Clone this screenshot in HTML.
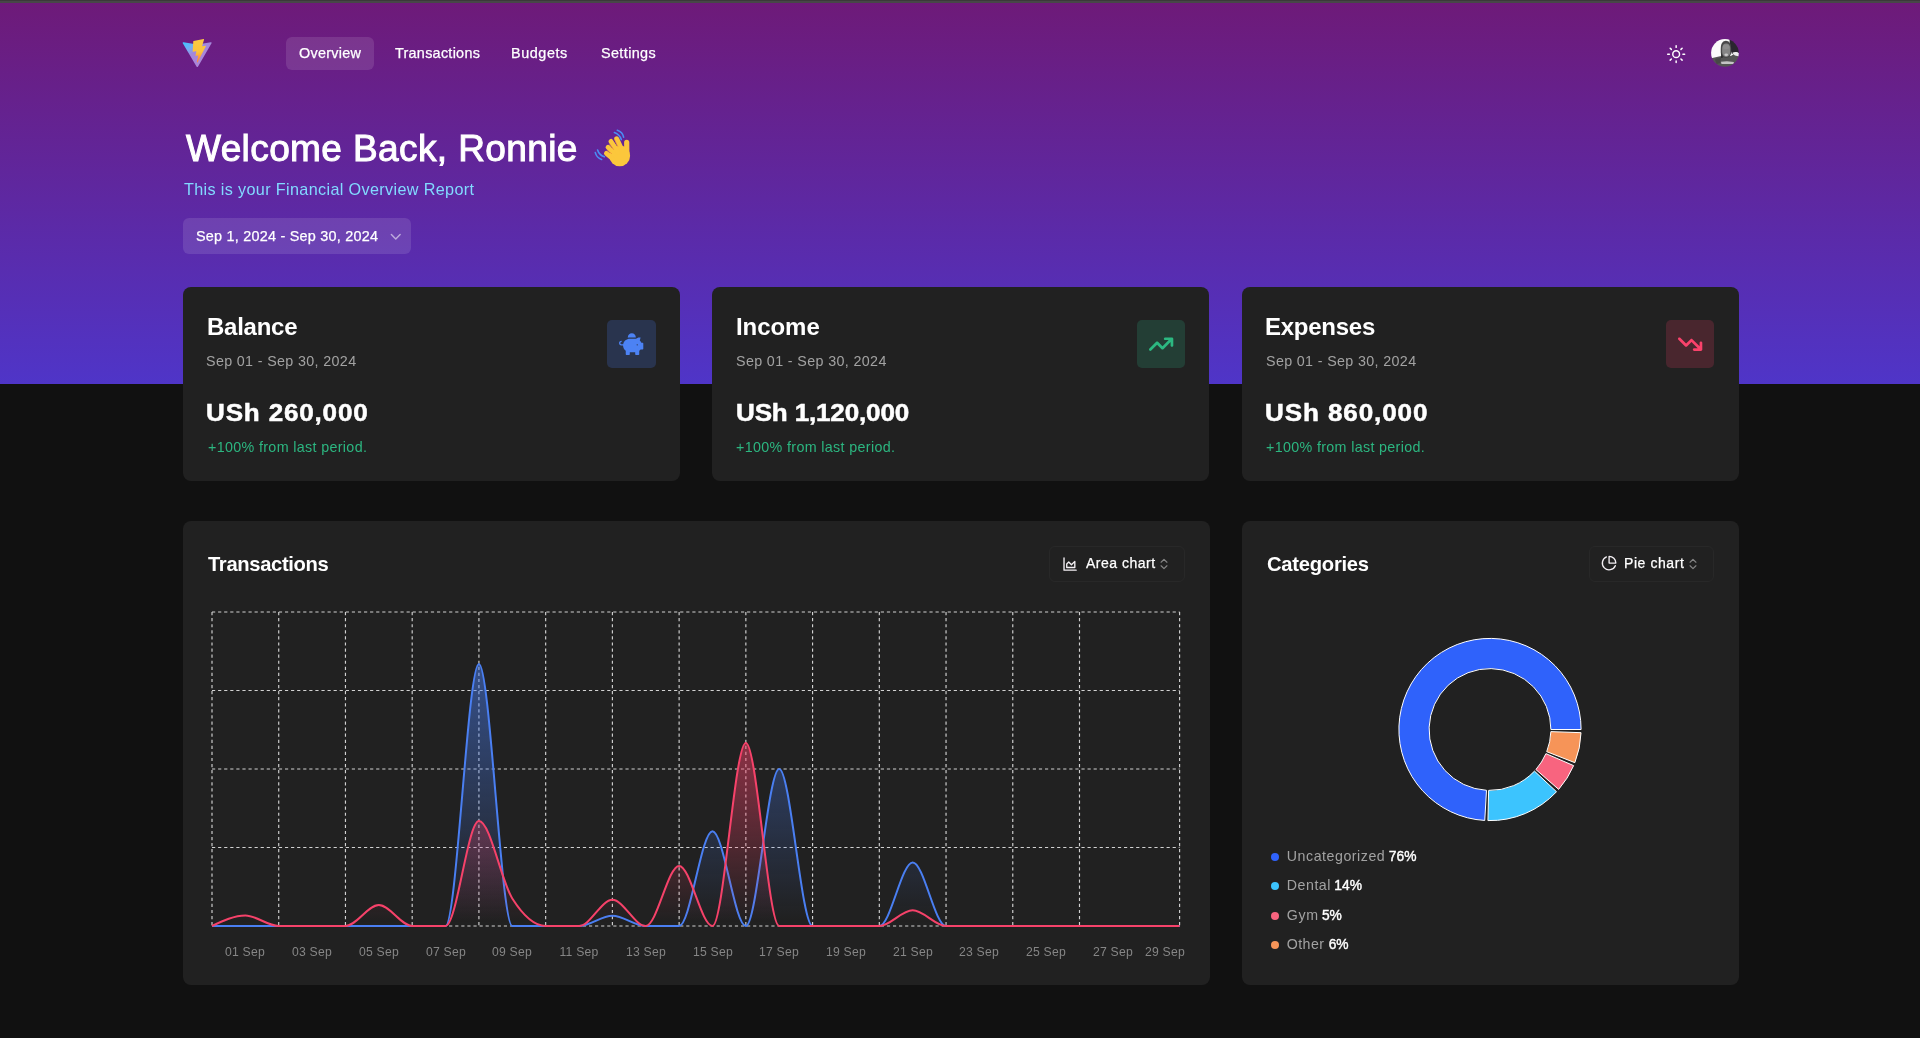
<!DOCTYPE html>
<html lang="en">
<head>
<meta charset="utf-8">
<title>Finance Overview</title>
<style>
*{box-sizing:border-box;margin:0;padding:0}
html,body{width:1920px;height:1038px;overflow:hidden;background:#111111}
body{font-family:"Liberation Sans",sans-serif;color:#fff;position:relative;-webkit-font-smoothing:antialiased}
.abs{position:absolute}
.topbar{left:0;top:0;width:1920px;height:3px;background:linear-gradient(#3b3939 0,#3b3939 1px,#474747 1px,#474747 3px);z-index:5}
.hero{left:0;top:0;width:1920px;height:384px;background:linear-gradient(180deg,#6e1a78 0%,#4f35c8 100%)}
.t{position:absolute;white-space:nowrap;line-height:1.2;transform-origin:0 50%;will-change:transform}
.navbtn{left:286px;top:37px;width:87.5px;height:33px;border-radius:6px;background:rgba(255,255,255,.115)}
.nav{font-size:14.4px;color:#fff;-webkit-text-stroke:.25px #fff}
.title{font-size:37px;color:#fff;-webkit-text-stroke:1px #fff}
.sub{font-size:16.2px;color:#82daff}
.datebtn{left:183px;top:217.5px;width:228px;height:36.5px;border-radius:6px;background:rgba(255,255,255,.115)}
.card{position:absolute;background:#212121;border-radius:8px}
.ctitle{font-size:24px;font-weight:700;color:#fff}
.cdate{font-size:14.3px;color:#a2a2a2}
.amt{font-size:23.7px;font-weight:700;color:#fff;-webkit-text-stroke:.5px #fff}
.delta{font-size:14.3px;color:#2cb680}
.ibox{position:absolute;width:48.6px;height:48.1px;border-radius:5px;top:320px}
.h2{font-size:20.2px;font-weight:700;color:#fff}
.sel{position:absolute;top:546px;height:36px;border:1px solid #282828;border-radius:6px}
.selt{font-size:14px;color:#fff;-webkit-text-stroke:.25px #fff}
.tk{will-change:transform;position:absolute;top:945px;letter-spacing:.25px;width:60px;text-align:center;font-size:12.2px;line-height:15px;color:#868686;white-space:nowrap}
.lg{font-size:14.2px;color:#a2a2a2}
.lg b{color:#fff;font-weight:400;font-size:13.8px;-webkit-text-stroke:.4px #fff}
.dot{position:absolute;width:8px;height:8px;border-radius:50%;left:1270.8px}
svg{position:absolute;overflow:visible}
#c1a{letter-spacing:0.745px;margin-left:-1.00px;transform:scaleX(1.1)}#c2a{letter-spacing:-0.156px;margin-left:-0.40px;transform:scaleX(1.1)}#c3a{letter-spacing:0.803px;margin-left:-0.80px;transform:scaleX(1.1)}#n1{letter-spacing:0.286px;margin-left:1.00px}#n2{letter-spacing:0.273px;margin-left:0.00px}#n3{letter-spacing:0.583px;margin-left:0.00px}#n4{letter-spacing:0.386px;margin-left:0.80px}#title{letter-spacing:0.395px;margin-left:2.00px}#sub{letter-spacing:0.351px;margin-left:1.00px}#dtxt{letter-spacing:0.240px;margin-left:0.80px}#c1t{letter-spacing:-0.250px;margin-left:-0.50px}#c2t{letter-spacing:-0.060px;margin-left:-0.50px}#c3t{letter-spacing:-0.257px;margin-left:-0.80px}#c1d{letter-spacing:0.350px;margin-left:-1.00px}#c2d{letter-spacing:0.365px;margin-left:-0.80px}#c3d{letter-spacing:0.350px;margin-left:-0.40px}#c1p{letter-spacing:0.341px;margin-left:0.00px}#c2p{letter-spacing:0.345px;margin-left:-0.80px}#c3p{letter-spacing:0.336px;margin-left:-0.40px}#h2a{letter-spacing:-0.345px;margin-left:0.80px}#h2b{letter-spacing:-0.256px;margin-left:0.80px}#s1{letter-spacing:0.500px;margin-left:0.50px}#s2{letter-spacing:0.575px;margin-left:-0.60px}#l1a{letter-spacing:0.533px;margin-left:-0.20px}#l1b{letter-spacing:0.000px;margin-left:-0.40px}#l2a{letter-spacing:0.520px;margin-left:-0.20px}#l2b{letter-spacing:0.000px;margin-left:-0.60px}#l3a{letter-spacing:0.600px;margin-left:-0.20px}#l3b{letter-spacing:0.000px;margin-left:-0.60px}#l4a{letter-spacing:0.400px;margin-left:-0.20px}#l4b{letter-spacing:0.000px;margin-left:0.40px}</style>
</head>
<body>
<div class="abs hero"></div>
<div class="abs topbar"></div>

<!-- header -->
<svg style="left:182.2px;top:39.3px" width="30.3" height="28.75" viewBox="0 0 410 404" preserveAspectRatio="none">
<defs><linearGradient id="vg0" x1="6" y1="33" x2="235" y2="344" gradientUnits="userSpaceOnUse"><stop offset="0" stop-color="#36c8ff"/><stop offset=".36" stop-color="#74aef5"/><stop offset=".56" stop-color="#a287dc"/><stop offset="1" stop-color="#ab86d8"/></linearGradient>
<linearGradient id="vg1" x1="194.651" y1="8.818" x2="236.076" y2="292.989" gradientUnits="userSpaceOnUse"><stop offset="0" stop-color="#fccb40"/><stop offset=".6" stop-color="#fbc53c"/><stop offset="1" stop-color="#ff8a3a"/></linearGradient></defs>
<path d="M399.641 59.5246L215.643 388.545C211.844 395.338 202.084 395.378 198.228 388.618L10.5817 59.5563C6.38087 52.1896 12.6802 43.2665 21.0281 44.7586L205.223 77.6824C206.398 77.8924 207.601 77.8904 208.776 77.6763L389.119 44.8058C397.439 43.2894 403.768 52.1434 399.641 59.5246Z" fill="url(#vg0)"/>
<path d="M292.965 1.5744L156.801 28.2552C154.563 28.6937 152.906 30.5903 152.771 32.8664L144.395 174.33C144.198 177.662 147.258 180.248 150.51 179.498L188.42 170.749C191.967 169.931 195.172 173.055 194.443 176.622L183.18 231.775C182.422 235.487 185.907 238.661 189.532 237.56L212.947 230.446C216.577 229.344 220.065 232.527 219.297 236.242L201.398 322.875C200.278 328.294 207.486 331.249 210.492 326.603L212.5 323.5L323.454 102.072C325.312 98.3645 322.108 94.137 318.036 94.9228L279.014 102.454C275.347 103.161 272.227 99.746 273.262 96.1583L298.731 7.86689C299.767 4.27314 296.636 0.855181 292.965 1.5744Z" fill="url(#vg1)"/>
</svg>
<div class="abs navbtn"></div>
<span class="t nav" id="n1" style="left:298.2px;top:44.9px">Overview</span>
<span class="t nav" id="n2" style="left:394.6px;top:44.9px">Transactions</span>
<span class="t nav" id="n3" style="left:511.4px;top:44.9px">Budgets</span>
<span class="t nav" id="n4" style="left:599.9px;top:44.9px">Settings</span>
<svg style="left:1665.6px;top:43.8px" width="20.3" height="20.3" viewBox="0 0 24 24" fill="none" stroke="#fff" stroke-width="1.75" stroke-linecap="round" stroke-linejoin="round"><circle cx="12" cy="12" r="4"/><path d="M12 2v2"/><path d="M12 20v2"/><path d="m4.93 4.93 1.41 1.41"/><path d="m17.66 17.66 1.41 1.41"/><path d="M2 12h2"/><path d="M20 12h2"/><path d="m6.34 17.66-1.41 1.41"/><path d="m19.07 4.93-1.41 1.41"/></svg>
<svg style="left:1710.5px;top:39px" width="27.9" height="27.9" viewBox="0 0 28 28">
<defs><clipPath id="avc"><circle cx="14" cy="14" r="13.900"/></clipPath><filter id="avb" x="-10%" y="-10%" width="120%" height="120%"><feGaussianBlur stdDeviation=".55"/></filter></defs>
<g clip-path="url(#avc)"><g filter="url(#avb)">
<rect x="-2" y="-2" width="32" height="32" fill="#fbfbfb"/>
<path d="M18.500 -1L30 -1L30 15L26 13.500L21 15L19 9z" fill="#29262e"/>
<path d="M-1 19.500L8 17.500L13 16.500L20 17L23 15L30 17L30 30L-1 30z" fill="#545454"/>
<path d="M9.800 9.500C9.800 4.500 12 1.800 15 1.800S20.200 4.500 20.200 9.500V13C20.200 16.500 18 19 15 19S9.800 16.500 9.800 13z" fill="#4a4a4a"/>
<path d="M11.200 9C11.500 6 13 4.600 15.200 4.600S19 6 19.300 9V13C19.300 16 17.500 18 15.200 18S11.200 16 11.200 13z" fill="#858585"/>
<ellipse cx="15.200" cy="8" rx="3.200" ry="2.200" fill="#8e8e8e"/>
<ellipse cx="15.300" cy="15.800" rx="1.800" ry="1.300" fill="#c9c9c9"/>
<path d="M10.300 13.500L12.200 18.500L10 19z" fill="#2e2e2e"/>
<path d="M21.300 14C23 12.600 26 12.400 28.500 14.500V17.500L24 16.500z" fill="#ececec"/>
<path d="M10 22.800L16 22.400L23 23L22.500 25L10.500 25.200z" fill="#c4c4c4"/>
<path d="M4 20L10 18.500L9 24L5.500 25z" fill="#474747"/>
</g></g></svg>

<span class="t title" id="title" style="left:183.6px;top:127.4px">Welcome Back, Ronnie</span>
<svg style="left:593px;top:128px" width="40" height="40" viewBox="0 0 40 40">
<g fill="none" stroke="#4a8df5" stroke-width="1.6" stroke-linecap="round">
<path d="M24.300 2.300Q29.600 4 30.600 9.100"/><path d="M21.400 4.600Q26.600 6.500 28.300 11.600"/>
<path d="M2.300 24.600Q3.600 29.800 8.600 31.400"/><path d="M4.600 22Q6.100 27 11.400 28.800"/>
</g>
<g stroke="#fbc73c" stroke-linecap="round" fill="#fbc73c">
<circle cx="26.700" cy="27.800" r="10.400" stroke="none"/>
<path d="M13.400 25.400L20 31" stroke-width="4.800"/>
<path d="M15 19.200L22 27" stroke-width="4.800"/>
<path d="M17.900 13.400L25 24" stroke-width="4.800"/>
<path d="M23.700 10.700L29 22" stroke-width="4.900"/>
<path d="M33.700 14.300L33.800 26" stroke-width="5.200"/>
<path d="M20 31L24 36" stroke-width="3"/>
</g>
<g stroke="#ef8f3a" stroke-width=".8" stroke-linecap="round" fill="none" opacity=".9">
<path d="M14.600 22.300l4 3.300"/><path d="M16.800 16.300l3.800 5.200"/><path d="M21.600 11.500l3.100 6.800"/>
</g>
</svg>
<span class="t sub" id="sub" style="left:183.4px;top:179.9px">This is your Financial Overview Report</span>
<div class="abs datebtn"></div>
<span class="t nav" id="dtxt" style="left:195px;top:227.6px">Sep 1, 2024 - Sep 30, 2024</span>
<svg style="left:386.5px;top:228.1px" width="17.5" height="17.5" viewBox="0 0 24 24" fill="none" stroke="#fff" stroke-opacity=".55" stroke-width="2" stroke-linecap="round" stroke-linejoin="round"><path d="m6 9 6 6 6-6"/></svg>

<!-- stat cards -->
<div class="card" style="left:183px;top:286.6px;width:497px;height:194.4px"></div>
<span class="t ctitle" id="c1t" style="left:207.3px;top:313.3px">Balance</span>
<span class="t cdate" id="c1d" style="left:207.3px;top:353.1px">Sep 01 - Sep 30, 2024</span>
<span class="t amt" id="c1a" style="left:207.3px;top:398.5px">USh 260,000</span>
<span class="t delta" id="c1p" style="left:207.9px;top:439px">+100% from last period.</span>
<div class="ibox" style="left:607.1px;width:48.9px;background:#29344e"></div>
<svg style="left:619.25px;top:332.15px" width="24.3" height="24.3" viewBox="0 0 576 512" fill="#4c82f4"><path d="M560 224h-29.500c-8.800-20-21.600-37.700-37.400-52.500L512 96h-32c-29.400 0-55.400 13.500-73 34.300-7.600-1.100-15.100-2.300-23-2.300H256c-77.400 0-141.900 55-156.800 128H56c-14.800 0-26.500-13.500-23.500-28.800C34.700 215.800 45.400 208 57 208h1c3.300 0 6-2.700 6-6v-20c0-3.300-2.700-6-6-6-28.500 0-53.900 20.400-57.500 48.600C-3.900 258.800 22.700 288 56 288h40c0 52.200 25.400 98.100 64 127.300V496c0 8.800 7.200 16 16 16h64c8.800 0 16-7.200 16-16v-48h128v48c0 8.800 7.200 16 16 16h64c8.800 0 16-7.200 16-16v-80.700c11.800-8.900 22.300-19.400 31.300-31.300H560c8.800 0 16-7.200 16-16V240c0-8.800-7.200-16-16-16zm-128 64c-8.800 0-16-7.200-16-16s7.200-16 16-16 16 7.200 16 16-7.200 16-16 16zM256 96h128c5.400 0 10.700.4 15.900.8 0-.3.100-.5.100-.8 0-53-43-96-96-96s-96 43-96 96c0 2.100.5 4.100.6 6.200 15.200-3.900 31-6.200 47.400-6.200z"/></svg><div class="card" style="left:712.3px;top:286.6px;width:497px;height:194.4px"></div>
<span class="t ctitle" id="c2t" style="left:736.5999999999999px;top:313.3px">Income</span>
<span class="t cdate" id="c2d" style="left:736.5999999999999px;top:353.1px">Sep 01 - Sep 30, 2024</span>
<span class="t amt" id="c2a" style="left:736.5999999999999px;top:398.5px">USh 1,120,000</span>
<span class="t delta" id="c2p" style="left:737.1999999999999px;top:439px">+100% from last period.</span>
<div class="ibox" style="left:1137.0px;width:47.9px;background:#233e35"></div>
<svg style="left:1148.55px;top:332.15px" width="24.3" height="24.3" viewBox="0 0 576 512" fill="#2cb881"><path d="M384 160c-17.700 0-32-14.300-32-32s14.300-32 32-32H544c17.700 0 32 14.300 32 32V288c0 17.700-14.300 32-32 32s-32-14.300-32-32V205.300L342.600 374.600c-12.500 12.500-32.800 12.500-45.300 0L192 269.300 54.600 406.600c-12.500 12.500-32.800 12.500-45.300 0s-12.500-32.800 0-45.300l160-160c12.500-12.500 32.800-12.500 45.300 0L320 306.700 466.700 160H384z"/></svg><div class="card" style="left:1241.7px;top:286.6px;width:497px;height:194.4px"></div>
<span class="t ctitle" id="c3t" style="left:1266.0px;top:313.3px">Expenses</span>
<span class="t cdate" id="c3d" style="left:1266.0px;top:353.1px">Sep 01 - Sep 30, 2024</span>
<span class="t amt" id="c3a" style="left:1266.0px;top:398.5px">USh 860,000</span>
<span class="t delta" id="c3p" style="left:1266.6px;top:439px">+100% from last period.</span>
<div class="ibox" style="left:1666.0px;width:48.2px;background:#49262e"></div>
<svg style="left:1677.95px;top:332.15px" width="24.3" height="24.3" viewBox="0 0 576 512" fill="#f9426b"><path d="M384 352c-17.700 0-32 14.300-32 32s14.300 32 32 32H544c17.700 0 32-14.300 32-32V224c0-17.700-14.300-32-32-32s-32 14.300-32 32v82.700L342.600 137.400c-12.500-12.500-32.800-12.500-45.300 0L192 242.700 54.600 105.400c-12.500-12.500-32.800-12.500-45.300 0s-12.500 32.800 0 45.300l160 160c12.500 12.500 32.800 12.500 45.300 0L320 205.300 466.700 352H384z"/></svg>

<!-- transactions card -->
<div class="card" style="left:183px;top:521px;width:1027px;height:464px"></div>
<div class="card" style="left:1242px;top:521px;width:496.6px;height:464px"></div>
<span class="t h2" id="h2a" style="left:207.3px;top:551.9px">Transactions</span>
<div class="sel" style="left:1049px;width:136px"></div>
<svg style="left:1061.6px;top:556.2px" width="16.2" height="16.2" viewBox="0 0 24 24" fill="none" stroke="#f4f0f4" stroke-width="2" stroke-linecap="round" stroke-linejoin="round"><path d="M3 3v18h18"/><path d="M7 12v5h12V8l-5 5-4-4Z"/></svg>
<span class="t selt" id="s1" style="left:1085.6px;top:555.1px">Area chart</span>
<svg style="left:1157.2px;top:557.2px" width="14" height="14" viewBox="0 0 24 24" fill="none" stroke="#fff" stroke-opacity=".45" stroke-width="2" stroke-linecap="round" stroke-linejoin="round"><path d="m7 15 5 5 5-5"/><path d="m7 9 5-5 5 5"/></svg>

<svg style="left:0;top:0" width="1920" height="1038" viewBox="0 0 1920 1038">
<defs>
<linearGradient id="gi" x1="0" y1="0" x2="0" y2="1"><stop offset="2%" stop-color="#4a7ff2" stop-opacity=".5"/><stop offset="98%" stop-color="#4a7ff2" stop-opacity="0"/></linearGradient>
<linearGradient id="ge" x1="0" y1="0" x2="0" y2="1"><stop offset="2%" stop-color="#f6426a" stop-opacity=".5"/><stop offset="98%" stop-color="#f6426a" stop-opacity="0"/></linearGradient>
</defs>
<g stroke="#d2d2d2" stroke-width="1.15" stroke-dasharray="3.2 2.88" fill="none"><line x1="212.00" y1="612.00" x2="1179.60" y2="612.00"/><line x1="212.00" y1="690.50" x2="1179.60" y2="690.50"/><line x1="212.00" y1="769.00" x2="1179.60" y2="769.00"/><line x1="212.00" y1="847.50" x2="1179.60" y2="847.50"/><line x1="212.00" y1="926.00" x2="1179.60" y2="926.00"/><line x1="212.00" y1="612.00" x2="212.00" y2="926.00"/><line x1="278.73" y1="612.00" x2="278.73" y2="926.00"/><line x1="345.46" y1="612.00" x2="345.46" y2="926.00"/><line x1="412.19" y1="612.00" x2="412.19" y2="926.00"/><line x1="478.92" y1="612.00" x2="478.92" y2="926.00"/><line x1="545.66" y1="612.00" x2="545.66" y2="926.00"/><line x1="612.39" y1="612.00" x2="612.39" y2="926.00"/><line x1="679.12" y1="612.00" x2="679.12" y2="926.00"/><line x1="745.85" y1="612.00" x2="745.85" y2="926.00"/><line x1="812.58" y1="612.00" x2="812.58" y2="926.00"/><line x1="879.31" y1="612.00" x2="879.31" y2="926.00"/><line x1="946.04" y1="612.00" x2="946.04" y2="926.00"/><line x1="1012.77" y1="612.00" x2="1012.77" y2="926.00"/><line x1="1079.50" y1="612.00" x2="1079.50" y2="926.00"/><line x1="1179.60" y1="612.00" x2="1179.60" y2="926.00"/></g>
<path d="M212.00,926.00C223.12,926.00,234.24,926.00,245.37,926.00C256.49,926.00,267.61,926.00,278.73,926.00C289.85,926.00,300.97,926.00,312.10,926.00C323.22,926.00,334.34,926.00,345.46,926.00C356.58,926.00,367.71,926.00,378.83,926.00C389.95,926.00,401.07,926.00,412.19,926.00C423.31,926.00,434.44,926.00,445.56,926.00C456.68,926.00,467.80,664.00,478.92,664.00C490.05,664.00,501.17,926.00,512.29,926.00C523.41,926.00,534.53,926.00,545.66,926.00C556.78,926.00,567.90,926.00,579.02,926.00C590.14,926.00,601.26,915.70,612.39,915.70C623.51,915.70,634.63,926.00,645.75,926.00C656.87,926.00,668.00,926.00,679.12,926.00C690.24,926.00,701.36,831.20,712.48,831.20C723.60,831.20,734.73,926.00,745.85,926.00C756.97,926.00,768.09,769.00,779.21,769.00C790.34,769.00,801.46,926.00,812.58,926.00C823.70,926.00,834.82,926.00,845.94,926.00C857.07,926.00,868.19,926.00,879.31,926.00C890.43,926.00,901.55,862.50,912.68,862.50C923.80,862.50,934.92,926.00,946.04,926.00C957.16,926.00,968.29,926.00,979.41,926.00C990.53,926.00,1001.65,926.00,1012.77,926.00C1023.89,926.00,1035.02,926.00,1046.14,926.00C1057.26,926.00,1068.38,926.00,1079.50,926.00C1090.63,926.00,1101.75,926.00,1112.87,926.00C1123.99,926.00,1135.11,926.00,1146.23,926.00C1157.36,926.00,1168.48,926.00,1179.60,926.00L1179.60,926.00L212.00,926.00Z" fill="url(#gi)"/>
<path d="M212.00,926.00C223.12,926.00,234.24,926.00,245.37,926.00C256.49,926.00,267.61,926.00,278.73,926.00C289.85,926.00,300.97,926.00,312.10,926.00C323.22,926.00,334.34,926.00,345.46,926.00C356.58,926.00,367.71,926.00,378.83,926.00C389.95,926.00,401.07,926.00,412.19,926.00C423.31,926.00,434.44,926.00,445.56,926.00C456.68,926.00,467.80,664.00,478.92,664.00C490.05,664.00,501.17,926.00,512.29,926.00C523.41,926.00,534.53,926.00,545.66,926.00C556.78,926.00,567.90,926.00,579.02,926.00C590.14,926.00,601.26,915.70,612.39,915.70C623.51,915.70,634.63,926.00,645.75,926.00C656.87,926.00,668.00,926.00,679.12,926.00C690.24,926.00,701.36,831.20,712.48,831.20C723.60,831.20,734.73,926.00,745.85,926.00C756.97,926.00,768.09,769.00,779.21,769.00C790.34,769.00,801.46,926.00,812.58,926.00C823.70,926.00,834.82,926.00,845.94,926.00C857.07,926.00,868.19,926.00,879.31,926.00C890.43,926.00,901.55,862.50,912.68,862.50C923.80,862.50,934.92,926.00,946.04,926.00C957.16,926.00,968.29,926.00,979.41,926.00C990.53,926.00,1001.65,926.00,1012.77,926.00C1023.89,926.00,1035.02,926.00,1046.14,926.00C1057.26,926.00,1068.38,926.00,1079.50,926.00C1090.63,926.00,1101.75,926.00,1112.87,926.00C1123.99,926.00,1135.11,926.00,1146.23,926.00C1157.36,926.00,1168.48,926.00,1179.60,926.00" fill="none" stroke="#4a7ff2" stroke-width="2"/>
<path d="M212.00,926.00C223.12,920.75,234.24,915.50,245.37,915.50C256.49,915.50,267.61,926.00,278.73,926.00C289.85,926.00,300.97,926.00,312.10,926.00C323.22,926.00,334.34,926.00,345.46,926.00C356.58,926.00,367.71,905.00,378.83,905.00C389.95,905.00,401.07,926.00,412.19,926.00C423.31,926.00,434.44,926.00,445.56,926.00C456.68,926.00,467.80,821.00,478.92,821.00C490.05,821.00,501.17,881.00,512.29,898.50C523.41,916.00,534.53,926.00,545.66,926.00C556.78,926.00,567.90,926.00,579.02,926.00C590.14,926.00,601.26,899.80,612.39,899.80C623.51,899.80,634.63,926.00,645.75,926.00C656.87,926.00,668.00,865.90,679.12,865.90C690.24,865.90,701.36,926.00,712.48,926.00C723.60,926.00,734.73,742.90,745.85,742.90C756.97,742.90,768.09,926.00,779.21,926.00C790.34,926.00,801.46,926.00,812.58,926.00C823.70,926.00,834.82,926.00,845.94,926.00C857.07,926.00,868.19,926.00,879.31,926.00C890.43,926.00,901.55,910.30,912.68,910.30C923.80,910.30,934.92,926.00,946.04,926.00C957.16,926.00,968.29,926.00,979.41,926.00C990.53,926.00,1001.65,926.00,1012.77,926.00C1023.89,926.00,1035.02,926.00,1046.14,926.00C1057.26,926.00,1068.38,926.00,1079.50,926.00C1090.63,926.00,1101.75,926.00,1112.87,926.00C1123.99,926.00,1135.11,926.00,1146.23,926.00C1157.36,926.00,1168.48,926.00,1179.60,926.00L1179.60,926.00L212.00,926.00Z" fill="url(#ge)"/>
<path d="M212.00,926.00C223.12,920.75,234.24,915.50,245.37,915.50C256.49,915.50,267.61,926.00,278.73,926.00C289.85,926.00,300.97,926.00,312.10,926.00C323.22,926.00,334.34,926.00,345.46,926.00C356.58,926.00,367.71,905.00,378.83,905.00C389.95,905.00,401.07,926.00,412.19,926.00C423.31,926.00,434.44,926.00,445.56,926.00C456.68,926.00,467.80,821.00,478.92,821.00C490.05,821.00,501.17,881.00,512.29,898.50C523.41,916.00,534.53,926.00,545.66,926.00C556.78,926.00,567.90,926.00,579.02,926.00C590.14,926.00,601.26,899.80,612.39,899.80C623.51,899.80,634.63,926.00,645.75,926.00C656.87,926.00,668.00,865.90,679.12,865.90C690.24,865.90,701.36,926.00,712.48,926.00C723.60,926.00,734.73,742.90,745.85,742.90C756.97,742.90,768.09,926.00,779.21,926.00C790.34,926.00,801.46,926.00,812.58,926.00C823.70,926.00,834.82,926.00,845.94,926.00C857.07,926.00,868.19,926.00,879.31,926.00C890.43,926.00,901.55,910.30,912.68,910.30C923.80,910.30,934.92,926.00,946.04,926.00C957.16,926.00,968.29,926.00,979.41,926.00C990.53,926.00,1001.65,926.00,1012.77,926.00C1023.89,926.00,1035.02,926.00,1046.14,926.00C1057.26,926.00,1068.38,926.00,1079.50,926.00C1090.63,926.00,1101.75,926.00,1112.87,926.00C1123.99,926.00,1135.11,926.00,1146.23,926.00C1157.36,926.00,1168.48,926.00,1179.60,926.00" fill="none" stroke="#f6426a" stroke-width="2"/>
<path d="M1581.10,729.50A91.10,91.10,0,1,0,1484.76,820.45L1486.49,790.30A60.90,60.90,0,1,1,1550.90,729.50Z" fill="#2f62fb" stroke="#fff" stroke-width="1"/><path d="M1487.93,820.58A91.10,91.10,0,0,0,1556.52,791.75L1534.47,771.11A60.90,60.90,0,0,1,1488.62,790.38Z" fill="#3cc4fe" stroke="#fff" stroke-width="1"/><path d="M1558.65,789.39A91.10,91.10,0,0,0,1573.64,765.61L1545.91,753.64A60.90,60.90,0,0,1,1535.89,769.53Z" fill="#f8647f" stroke="#fff" stroke-width="1"/><path d="M1574.85,762.67A91.10,91.10,0,0,0,1581.04,732.68L1550.86,731.63A60.90,60.90,0,0,1,1546.72,751.67Z" fill="#f69458" stroke="#fff" stroke-width="1"/>
</svg>
<span class="tk" style="left:215.4px">01 Sep</span><span class="tk" style="left:282.1px">03 Sep</span><span class="tk" style="left:348.8px">05 Sep</span><span class="tk" style="left:415.6px">07 Sep</span><span class="tk" style="left:482.3px">09 Sep</span><span class="tk" style="left:549.0px">11 Sep</span><span class="tk" style="left:615.8px">13 Sep</span><span class="tk" style="left:682.5px">15 Sep</span><span class="tk" style="left:749.2px">17 Sep</span><span class="tk" style="left:815.9px">19 Sep</span><span class="tk" style="left:882.7px">21 Sep</span><span class="tk" style="left:949.4px">23 Sep</span><span class="tk" style="left:1016.1px">25 Sep</span><span class="tk" style="left:1082.9px">27 Sep</span><span class="tk" style="left:1134.5px">29 Sep</span>

<!-- categories card -->
<span class="t h2" id="h2b" style="left:1266px;top:551.9px">Categories</span>
<div class="sel" style="left:1588.6px;width:125.6px"></div>
<svg style="left:1601.2px;top:555.4px" width="16.2" height="16.2" viewBox="0 0 24 24" fill="none" stroke="#f4f0f4" stroke-width="2" stroke-linecap="round" stroke-linejoin="round"><path d="M21.21 15.89A10 10 0 1 1 8 2.83"/><path d="M22 12A10 10 0 0 0 12 2v10z"/></svg>
<span class="t selt" id="s2" style="left:1625px;top:555.1px">Pie chart</span>
<svg style="left:1686.3px;top:557.2px" width="14" height="14" viewBox="0 0 24 24" fill="none" stroke="#fff" stroke-opacity=".45" stroke-width="2" stroke-linecap="round" stroke-linejoin="round"><path d="m7 15 5 5 5-5"/><path d="m7 9 5-5 5 5"/></svg>

<div class="dot" style="top:852.9px;background:#2f62fb"></div>
<div class="dot" style="top:882.4px;background:#3cc4fe"></div>
<div class="dot" style="top:911.8px;background:#f8647f"></div>
<div class="dot" style="top:941.2px;background:#f69458"></div>
<span class="t lg" id="l1" style="left:1286.8px;top:847.6px"><span id="l1a">Uncategorized</span> <b id="l1b">76%</b></span>
<span class="t lg" id="l2" style="left:1286.8px;top:877px"><span id="l2a">Dental</span> <b id="l2b">14%</b></span>
<span class="t lg" id="l3" style="left:1286.8px;top:906.5px"><span id="l3a">Gym</span> <b id="l3b">5%</b></span>
<span class="t lg" id="l4" style="left:1286.8px;top:935.9px"><span id="l4a">Other</span> <b id="l4b">6%</b></span>
</body>
</html>
